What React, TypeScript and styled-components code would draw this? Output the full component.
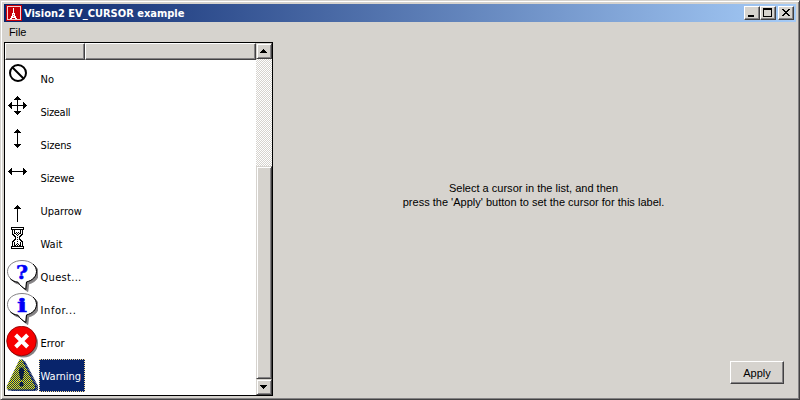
import React from "react";
import styled, { createGlobalStyle, css } from "styled-components";

const Global = createGlobalStyle`
  * { box-sizing: border-box; }
  body { margin: 0; background: #d6d3ce; overflow: hidden; }
`;

const raised = css`
  border: 1px solid;
  border-color: #d6d3ce #424142 #424142 #d6d3ce;
  box-shadow: inset 1px 1px 0 #fff, inset -1px -1px 0 #848284;
`;
const button = css`
  border: 1px solid;
  border-color: #fff #424142 #424142 #fff;
  box-shadow: inset -1px -1px 0 #848284;
`;

const Frame = styled.div`
  ${raised}
  width: 800px;
  height: 400px;
  padding: 3px;
  background: #d6d3ce;
  color: #000;
  font: 11px/14px "Liberation Sans", Arial, sans-serif;
  display: flex;
  flex-direction: column;
`;
const TitleBar = styled.header`
  height: 18px;
  flex: none;
  display: flex;
  align-items: center;
  padding: 0 2px;
  background: linear-gradient(90deg, #08246b, #a5cbf7);
`;
const Title = styled.h1`
  flex: 1;
  margin: 0 0 0 2px;
  padding-top: 1px;
  color: #fff;
  font: bold 11px/18px "DejaVu Sans Condensed", "DejaVu Sans", sans-serif;
  font-stretch: condensed;
  white-space: nowrap;
`;
const CaptionButton = styled.button<{ $gap?: boolean }>`
  ${button}
  width: 16px;
  height: 14px;
  padding: 0;
  margin-left: ${(p) => (p.$gap ? 2 : 0)}px;
  background: #d6d3ce;
  display: flex;
`;
const MenuBar = styled.nav`
  height: 20px;
  flex: none;
  padding: 3px 5px;
`;
const MenuItem = styled.span`
  font: 11px/14px "Liberation Sans", Arial, sans-serif;
  letter-spacing: -0.1px;
`;
const Body = styled.main`
  flex: 1;
  display: flex;
  min-height: 0;
`;
const ListBox = styled.section`
  width: 269px;
  height: 354px;
  border: 1px solid #000;
  background: #fff;
  display: flex;
`;
const ListContent = styled.div`
  width: 251px;
`;
const Header = styled.div`
  display: flex;
  height: 17px;
  margin-bottom: 2px;
`;
const HeaderCell = styled.div<{ $width: number }>`
  ${button}
  width: ${(p) => p.$width}px;
  background: #d6d3ce;
`;
const Row = styled.div`
  height: 33px;
  display: flex;
  align-items: flex-start;
  padding-left: 1px;
`;
const RowLabel = styled.span<{ $selected?: boolean; $spacing: number }>`
  width: 46px;
  height: 33px;
  margin-left: 1px;
  padding-left: 0.5px;
  border: 1px dotted ${(p) => (p.$selected ? "#f7db94" : "transparent")};
  background: ${(p) => (p.$selected ? "#08246b" : "transparent")};
  color: ${(p) => (p.$selected ? "#fff" : "#000")};
  font: 11px/33px "DejaVu Sans Condensed", "DejaVu Sans", sans-serif;
  font-stretch: condensed;
  letter-spacing: ${(p) => p.$spacing}px;
  white-space: nowrap;
`;
const ScrollBar = styled.div`
  width: 16px;
  display: flex;
  flex-direction: column;
  background: repeating-conic-gradient(#fff 0 25%, #d6d3ce 0 50%) 0 0 / 2px 2px;
`;
const ScrollButton = styled.div`
  ${raised}
  height: 16px;
  background: #d6d3ce;
  display: flex;
`;
const Thumb = styled.div`
  ${raised}
  height: 213px;
  margin-top: auto;
  background: #d6d3ce;
`;
const Preview = styled.section`
  flex: 1;
  display: flex;
  flex-direction: column;
  align-items: flex-end;
`;
const Message = styled.p`
  width: 521px;
  height: 28px;
  margin: 139px 4px 0 0;
  text-align: center;
  letter-spacing: 0.01px;
  white-space: pre-line;
`;
const ApplyButton = styled.button`
  ${button}
  width: 54px;
  height: 23px;
  margin: 152px 14px 0 0;
  padding: 0;
  background: #d6d3ce;
  color: #000;
  font: 11px/20px "Liberation Sans", Arial, sans-serif;
`;
const Svg = styled.svg`
  display: block;
  flex: none;
`;
const BubbleMark = styled.text`
  fill: #0000f7;
  stroke: #0000f7;
  stroke-width: 0.5px;
  font: bold 19px "DejaVu Serif", serif;
  text-anchor: middle;
`;

/* Turns rows of "#" characters into unit squares of a single path. */
function bitmap(rows: string[], left: number, top: number) {
  let d = "";
  rows.forEach((row, y) => {
    [...row].forEach((c, x) => {
      if (c === "#") d += `M${left + x} ${top + y}h1v1h-1z`;
    });
  });
  return d;
}

const HOURGLASS = bitmap(
  [
    "#############",
    "#...........#",
    "#############",
    ".#.#.....#.#.",
    ".#.#.....#.#.",
    ".#.#.#.#.#.#.",
    ".#.##.#.##.#.",
    ".##..#.#..##.",
    "..##..#..##..",
    "...##...##...",
    "....#.#.#....",
    "....#...#....",
    "...##.#.##...",
    "..##.....##..",
    ".##...#...##.",
    ".#.#.....#.#.",
    ".#.#..#..#.#.",
    ".#.#.#.#.#.#.",
    ".#.##.#.##.#.",
    "#############",
    "#...........#",
    "#############",
  ],
  5,
  0
);

const CLOSE = bitmap(
  ["##....##", ".##..##.", "..####..", "...##...", "..####..", ".##..##.", "##....##"],
  3,
  2
);

const UP = "M11 1h1v1h1v1h1v1h1v1h-7v-1h1v-1h1v-1h1z";
const DOWN = "M8 16h7v1h-1v1h-1v1h-1v1h-1v-1h-1v-1h-1v-1h-1z";
const LEFT = "M2 10h1v-1h1v-1h1v-1h1v7h-1v-1h-1v-1h-1v-1h-1z";
const RIGHT = "M17 7h1v1h1v1h1v1h1v1h-1v1h-1v1h-1v1h-1z";

const BUBBLE =
  "M16 .5C24 .5 30.5 5 30.5 11.5C30.5 16.5 26.5 20.5 20.5 22L19.8 29.5C16.5 27.5 13.5 25 12 22.3C6 21.5 1.5 17 1.5 11.5C1.5 5 8 .5 16 .5Z";

function Bubble({ mark, y, width }: { mark: string; y: number; width: number }) {
  return (
    <>
      <path d={BUBBLE} fill="#848284" stroke="#848284" transform="translate(2 2)" />
      <path d={BUBBLE} fill="#fff" stroke="#848284" />
      <path
        d="M27 4C29.5 6 30.5 8.5 30.5 11.5C30.5 16.5 26.5 20.5 20.5 22L19.8 29.5C16.5 27.5 13.5 25 12 22.3C9 22 6 20.5 4.2 18.7"
        fill="none"
        stroke="#000"
      />
      <BubbleMark x="16" y={y} textLength={width} lengthAdjust="spacingAndGlyphs">
        {mark}
      </BubbleMark>
    </>
  );
}

function CursorArt({ kind }: { kind: string }) {
  switch (kind) {
    case "no":
      return (
        <g fill="none" stroke="#000" strokeWidth="2">
          <circle cx="12" cy="11" r="8" />
          <path d="M6.5 5.5l11 11" />
        </g>
      );
    case "all":
      return <path d={UP + DOWN + LEFT + RIGHT + "M11 5h1v11h-1zM6 10h5v1h-5zM12 10h5v1h-5z"} />;
    case "ns":
      return <path d={UP + DOWN + "M11 5h1v11h-1z"} />;
    case "we":
      return <path d={LEFT + RIGHT + "M6 10h11v1H6z"} />;
    case "up":
      return <path d={UP + "M11 5h1v13h-1z"} transform="translate(0 10)" />;
    case "wait":
      return <path d={HOURGLASS} shapeRendering="crispEdges" />;
    case "question":
      return <Bubble mark="?" y={18.5} width={12} />;
    case "info":
      return <Bubble mark="i" y={18.5} width={10} />;
    case "error":
      return (
        <>
          <circle cx="17.5" cy="17" r="14.5" fill="#848284" />
          <circle cx="15.5" cy="15" r="14.8" fill="#f70000" stroke="#840000" strokeWidth="0.8" />
          <path d="M9.6 9l12 12M21.6 9l-12 12" stroke="#fff" strokeWidth="4" />
        </>
      );
    default:
      return (
        <>
          <defs>
            <pattern id="dither" width="2" height="2" patternUnits="userSpaceOnUse">
              <rect width="2" height="2" fill="#08246b" />
              <path d="M0 0h1v1H0zM1 1h1v1H1z" fill="#f7f300" shapeRendering="crispEdges" />
            </pattern>
            <pattern id="shade" width="2" height="2" patternUnits="userSpaceOnUse">
              <rect width="2" height="2" fill="#08246b" />
              <path d="M0 0h1v1H0zM1 1h1v1H1z" fill="#848284" shapeRendering="crispEdges" />
            </pattern>
          </defs>
          <path d="M15 2h4L32 27v4l-2 1H5z" fill="url(#shade)" />
          <path d="M13.5 .5h3L29.5 27v2.5L28 31H2L.8 29.5V27z" fill="url(#dither)" />
          <path d="M16.5 .5L29.5 27v2.5L28 31H2" fill="none" stroke="#08246b" />
          <path d="M13 10l1.5-1.5h2L18 10v4l-1.5 7h-2L13 14zM13.5 24l1-1h2l1 1v2.5l-1 1h-2l-1-1z" fill="#081c42" />
        </>
      );
  }
}

function CursorIcon({ kind }: { kind: string }) {
  return (
    <Svg width="32" height="33" viewBox="0 0 32 33">
      <CursorArt kind={kind} />
    </Svg>
  );
}

function Glyph({ d, height = 12 }: { d: string; height?: number }) {
  return (
    <Svg width="14" height={height} viewBox={`0 0 14 ${height}`} shapeRendering="crispEdges">
      <path d={d} fillRule="evenodd" />
    </Svg>
  );
}

function Logo() {
  return (
    <Svg width="16" height="16" viewBox="0 0 16 16" shapeRendering="crispEdges">
      <rect width="16" height="16" fill="#c60008" />
      <path d="M1.5 1.5h13v13h-13z" fill="none" stroke="#f7cfce" />
      <path d="M7 3h1v5h1v3h1v2h1v1h-2v-1H6v1H4v-1h1v-2h1V8h1z" fill="#fff" />
      <path d="M7 9h1v1H7zM7 11h1v1H7z" fill="#de6163" />
    </Svg>
  );
}

const items = [
  { name: "No", icon: "no", spacing: 0 },
  { name: "Sizeall", icon: "all", spacing: -0.3 },
  { name: "Sizens", icon: "ns", spacing: -0.15 },
  { name: "Sizewe", icon: "we", spacing: -0.15 },
  { name: "Uparrow", icon: "up", spacing: 0 },
  { name: "Wait", icon: "wait", spacing: 0 },
  { name: "Quest...", icon: "question", spacing: 0.3 },
  { name: "Infor...", icon: "info", spacing: 0.6 },
  { name: "Error", icon: "error", spacing: 0 },
  { name: "Warning", icon: "warning", spacing: 0, selected: true },
];

export default function App() {
  return (
    <>
      <Global />
      <Frame>
        <TitleBar>
          <Logo />
          <Title>Vision2 EV_CURSOR example</Title>
          <CaptionButton aria-label="Minimize">
            <Glyph d="M3 8h6v2H3z" />
          </CaptionButton>
          <CaptionButton aria-label="Maximize">
            <Glyph d="M2 1h9v9H2zM3 3h7v6H3z" />
          </CaptionButton>
          <CaptionButton $gap aria-label="Close">
            <Glyph d={CLOSE} />
          </CaptionButton>
        </TitleBar>
        <MenuBar>
          <MenuItem>File</MenuItem>
        </MenuBar>
        <Body>
          <ListBox>
            <ListContent>
              <Header>
                <HeaderCell $width={80} />
                <HeaderCell $width={171} />
              </Header>
              {items.map((item) => (
                <Row key={item.name}>
                  <CursorIcon kind={item.icon} />
                  <RowLabel $selected={item.selected} $spacing={item.spacing}>
                    {item.name}
                  </RowLabel>
                </Row>
              ))}
            </ListContent>
            <ScrollBar>
              <ScrollButton>
                <Glyph d="M6 5h1v1h1v1h1v1h1v1H3v-1h1v-1h1v-1h1z" height={14} />
              </ScrollButton>
              <Thumb />
              <ScrollButton>
                <Glyph d="M3 5h7v1H9v1H8v1H7v1H6v-1H5v-1H4v-1H3z" height={14} />
              </ScrollButton>
            </ScrollBar>
          </ListBox>
          <Preview>
            <Message>
              {"Select a cursor in the list, and then\npress the 'Apply' button to set the cursor for this label."}
            </Message>
            <ApplyButton>Apply</ApplyButton>
          </Preview>
        </Body>
      </Frame>
    </>
  );
}
